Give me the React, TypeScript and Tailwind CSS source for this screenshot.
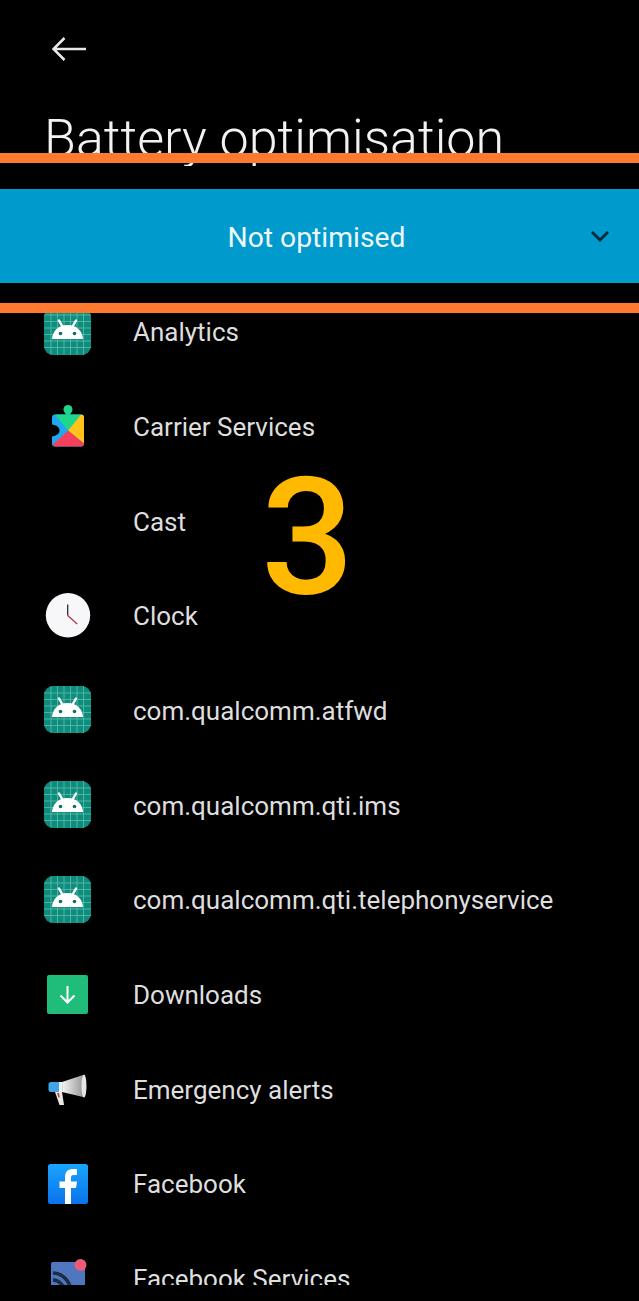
function AndroidIcon() {
  const grid = [7, 13.5, 20, 26.5, 33, 39.5];
  return (
    <svg width="47" height="47" viewBox="0 0 47 47" className="mb-[2px]">
      <rect width="47" height="47" rx="9" fill="#0f8d7c" />
      {grid.map((g) => (
        <g key={g} stroke="#5dbcae" strokeWidth="0.8">
          <line x1={g} y1="0" x2={g} y2="47" />
          <line x1="0" y1={g} x2="47" y2={g} />
        </g>
      ))}
      <path d="M8 31c.5-8 6.500-14 15.500-14S38.500 23 39 31z" fill="#fff" />
      <path d="M15 12.500l4 7M32 12.500l-4 7" stroke="#fff" strokeWidth="2.400" strokeLinecap="round" />
      <circle cx="16.500" cy="25.500" r="1.800" fill="#0e6f63" />
      <circle cx="30.500" cy="25.500" r="1.800" fill="#0e6f63" />
    </svg>
  );
}

function PlayServicesIcon() {
  return (
    <svg width="36" height="44" viewBox="0 1.500 36 44">
      <circle cx="18" cy="6" r="4.500" fill="#1fd68a" />
      <rect x="15.500" y="6" width="5" height="6" fill="#1fd68a" />
      <path d="M2 14a3 3 0 0 1 3-3h26a3 3 0 0 1 3 3v26a3 3 0 0 1-3 3H5a3 3 0 0 1-3-3V33a6 6 0 0 0 0-12z" fill="#1ea7f2" />
      <path d="M5 11h26l-13 16z" fill="#1fd68a" />
      <path d="M31 11a3 3 0 0 1 3 3v26L18 27z" fill="#ffc31a" />
      <path d="M34 40a3 3 0 0 1-3 3H5a3 3 0 0 1-2.500-1.500L18 27z" fill="#f4405a" />
      <circle cx="4.500" cy="27" r="5" fill="#000" />
    </svg>
  );
}

function ClockIcon() {
  return (
    <svg width="46" height="46" viewBox="0 0 46 46">
      <circle cx="23" cy="22.300" r="22.200" fill="#f7f7f9" />
      <path d="M22.700 11.500v11" stroke="#2b2b35" strokeWidth="1.300" />
      <path d="M22.700 22.500l9.500 8.500" stroke="#b8324a" strokeWidth="1.300" />
    </svg>
  );
}

function DownloadsIcon() {
  return (
    <svg width="41" height="39" viewBox="0 0 41 39">
      <rect width="41" height="39" rx="2" fill="#1fbd79" />
      <path d="M20.500 11v16M13.500 20.500l7 7 7-7" fill="none" stroke="#fff" strokeWidth="2" />
    </svg>
  );
}

function MegaphoneIcon() {
  return (
    <svg width="40" height="34" viewBox="0 0 40 34">
      <defs>
        <linearGradient id="cone" x1="0" y1="0" x2="1" y2="0">
          <stop offset="0" stopColor="#f4f4f4" />
          <stop offset="1" stopColor="#9a9a9a" />
        </linearGradient>
      </defs>
      <path d="M7 19h7l2 13h-4.500z" fill="#e8e8e8" />
      <path d="M9 20h2l.8 4.500h-1.500z" fill="#c2453a" />
      <path d="M14 9L35 2v22L14 19z" fill="url(#cone)" />
      <ellipse cx="36" cy="13" rx="2.500" ry="11.500" fill="#e6e6e6" />
      <rect x="0.500" y="9" width="14" height="10" rx="2.500" fill="#3ea5e6" />
      <rect x="11" y="9" width="3.500" height="10" fill="#f1f1f1" />
    </svg>
  );
}

function FacebookIcon() {
  return (
    <svg width="40" height="40" viewBox="0 0 40 40">
      <defs>
        <linearGradient id="fb" x1="0" y1="0" x2="0" y2="1">
          <stop offset="0" stopColor="#19a5fb" />
          <stop offset="1" stopColor="#0b72ec" />
        </linearGradient>
      </defs>
      <rect width="40" height="40" rx="2.500" fill="url(#fb)" />
      <path d="M17 40V24h-5.500v-6.500H17V13c0-5.500 3.300-8 8-8 2 0 3.500.2 4 .3v5.700h-3c-2.500 0-3 1.200-3 3v3.500h6l-1 6.500h-5v16z" fill="#fff" />
    </svg>
  );
}

function FbServicesIcon() {
  return (
    <svg width="40" height="40" viewBox="0 0 40 40">
      <rect x="3" y="3" width="34" height="37" rx="2" fill="#4f77c0" />
      <g fill="none" stroke="#1f2a44" strokeWidth="3.500">
        <path d="M5 14c9 0 18 8 18 20" />
        <path d="M5 21c6 0 12 6 12 13" />
      </g>
      <circle cx="32.500" cy="6" r="6" fill="#ee5a78" />
    </svg>
  );
}

const apps: { name: string; icon?: React.ReactNode }[] = [
  { name: "Analytics", icon: <AndroidIcon /> },
  { name: "Carrier Services", icon: <PlayServicesIcon /> },
  { name: "Cast" },
  { name: "Clock", icon: <ClockIcon /> },
  { name: "com.qualcomm.atfwd", icon: <AndroidIcon /> },
  { name: "com.qualcomm.qti.ims", icon: <AndroidIcon /> },
  { name: "com.qualcomm.qti.telephonyservice", icon: <AndroidIcon /> },
  { name: "Downloads", icon: <DownloadsIcon /> },
  { name: "Emergency alerts", icon: <MegaphoneIcon /> },
  { name: "Facebook", icon: <FacebookIcon /> },
  { name: "Facebook Services", icon: <FbServicesIcon /> },
];

export default function App() {
  return (
    <div className="relative h-[1301px] w-[639px] overflow-hidden bg-black font-['Roboto',sans-serif]">
      {/* header */}
      <div className="h-[166px] overflow-hidden pl-[44px] pt-[37px]">
        <svg width="34" height="24" viewBox="0 0 34 24" className="ml-[8px]" fill="none" stroke="#e8e8e8" strokeWidth="2.500">
          <path d="M34 12H2M12.500 1L1.500 12l11 11" />
        </svg>
        <h1 className="mt-[43px] whitespace-nowrap text-[52px] leading-[70px] font-light text-[#f2f2f2]">
          Battery optimisation
        </h1>
      </div>

      {/* dropdown */}
      <div className="relative mt-[23px] flex h-[94px] items-center justify-center bg-[#019acd] pr-[6px] pt-[5px]">
        <span className="text-[28.3px] text-[#eef8fc]">Not optimised</span>
        <svg width="20" height="13" viewBox="0 0 20 13" className="absolute right-[29px] top-[41px]" fill="none" stroke="#0b2a3c" strokeWidth="3">
          <path d="M2 2l8 8 8-8" />
        </svg>
      </div>

      {/* app list */}
      <div className="mt-[2px] h-[1000px] overflow-hidden">
        {apps.map((app) => (
          <div key={app.name} className="flex h-[94.67px] items-center">
            <div className="flex w-[133px] justify-center pl-[2px]">
              {app.icon}
            </div>
            <span className="whitespace-nowrap pt-[1px] text-[26px] text-[#dedede]">{app.name}</span>
          </div>
        ))}
      </div>

      {/* annotations drawn over the screenshot */}
      <div className="absolute left-0 top-[153px] h-[10px] w-full bg-[#ff7a2e]" />
      <div className="absolute left-0 top-[303px] h-[10px] w-full bg-[#ff7a2e]" />
      <div className="absolute left-[261px] top-[437px] text-[164px] leading-[200px] font-medium text-[#ffb900]">
        3
      </div>
    </div>
  );
}
